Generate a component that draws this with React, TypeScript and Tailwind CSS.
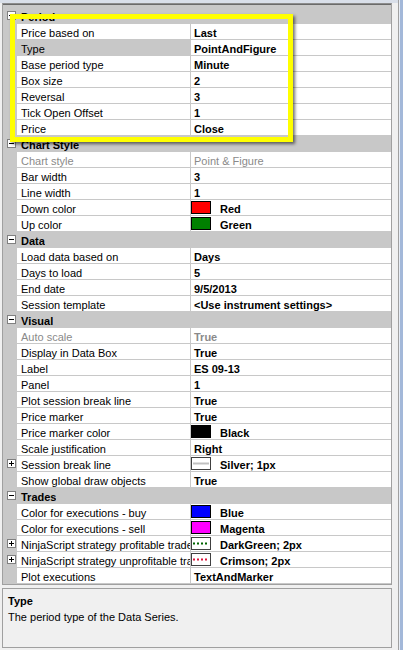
import React from "react";

type Swatch =
  | { kind: "fill"; cls: string }
  | { kind: "line"; color: string; dotted: boolean; width: number };

type Prop = {
  type: "prop";
  name: string;
  value: string;
  disabled?: boolean;
  regular?: boolean;
  selected?: boolean;
  expandable?: boolean;
  swatch?: Swatch;
};

type Category = { type: "cat"; label: string };

type Row = Prop | Category;

const rows: Row[] = [
  { type: "cat", label: "Period" },
  { type: "prop", name: "Price based on", value: "Last" },
  { type: "prop", name: "Type", value: "PointAndFigure", selected: true },
  { type: "prop", name: "Base period type", value: "Minute" },
  { type: "prop", name: "Box size", value: "2" },
  { type: "prop", name: "Reversal", value: "3" },
  { type: "prop", name: "Tick Open Offset", value: "1" },
  { type: "prop", name: "Price", value: "Close" },
  { type: "cat", label: "Chart Style" },
  { type: "prop", name: "Chart style", value: "Point & Figure", disabled: true, regular: true },
  { type: "prop", name: "Bar width", value: "3" },
  { type: "prop", name: "Line width", value: "1" },
  { type: "prop", name: "Down color", value: "Red", swatch: { kind: "fill", cls: "bg-[#ff0000]" } },
  { type: "prop", name: "Up color", value: "Green", swatch: { kind: "fill", cls: "bg-[#008000]" } },
  { type: "cat", label: "Data" },
  { type: "prop", name: "Load data based on", value: "Days" },
  { type: "prop", name: "Days to load", value: "5" },
  { type: "prop", name: "End date", value: "9/5/2013" },
  { type: "prop", name: "Session template", value: "<Use instrument settings>" },
  { type: "cat", label: "Visual" },
  { type: "prop", name: "Auto scale", value: "True", disabled: true },
  { type: "prop", name: "Display in Data Box", value: "True" },
  { type: "prop", name: "Label", value: "ES 09-13" },
  { type: "prop", name: "Panel", value: "1" },
  { type: "prop", name: "Plot session break line", value: "True" },
  { type: "prop", name: "Price marker", value: "True" },
  { type: "prop", name: "Price marker color", value: "Black", swatch: { kind: "fill", cls: "bg-[#000000]" } },
  { type: "prop", name: "Scale justification", value: "Right" },
  {
    type: "prop",
    name: "Session break line",
    value: "Silver; 1px",
    expandable: true,
    swatch: { kind: "line", color: "#c0c0c0", dotted: false, width: 2 },
  },
  { type: "prop", name: "Show global draw objects", value: "True" },
  { type: "cat", label: "Trades" },
  { type: "prop", name: "Color for executions - buy", value: "Blue", swatch: { kind: "fill", cls: "bg-[#0000ff]" } },
  { type: "prop", name: "Color for executions - sell", value: "Magenta", swatch: { kind: "fill", cls: "bg-[#ff00ff]" } },
  {
    type: "prop",
    name: "NinjaScript strategy profitable trades",
    value: "DarkGreen; 2px",
    expandable: true,
    swatch: { kind: "line", color: "#006400", dotted: true, width: 2 },
  },
  {
    type: "prop",
    name: "NinjaScript strategy unprofitable trades",
    value: "Crimson; 2px",
    expandable: true,
    swatch: { kind: "line", color: "#dc143c", dotted: true, width: 2 },
  },
  { type: "prop", name: "Plot executions", value: "TextAndMarker" },
];

function ExpandBox({ open }: { open: boolean }) {
  return (
    <svg width="9" height="9" viewBox="0 0 9 9" className="block shrink-0">
      <rect x="0.5" y="0.5" width="8" height="8" fill="#ffffff" stroke="#808080" />
      <path d="M2 4.5h5" stroke="#000000" strokeWidth="1" />
      {!open && <path d="M4.5 2v5" stroke="#000000" strokeWidth="1" />}
    </svg>
  );
}

function SwatchBox({ swatch }: { swatch: Swatch }) {
  if (swatch.kind === "fill") {
    return <span className={`block w-[20px] h-[13px] shrink-0 border border-black ${swatch.cls}`} />;
  }
  return (
    <span className="block w-[20px] h-[13px] shrink-0 border border-[#404040] bg-white">
      <svg width="18" height="11" viewBox="0 0 18 11" className="block">
        <line
          x1="1"
          y1="5.5"
          x2="17"
          y2="5.5"
          stroke={swatch.color}
          strokeWidth={swatch.width}
          strokeDasharray={swatch.dotted ? "2 2" : undefined}
        />
      </svg>
    </span>
  );
}

function CategoryRow({ label }: { label: string }) {
  return (
    <div className="flex h-[16px] bg-[#c8c8c8]">
      <div className="w-[14px] h-full flex items-start pt-[3px] pl-[4px]">
        <ExpandBox open />
      </div>
      <div className="pl-[4px] font-bold text-black leading-[18px] h-[16px] overflow-hidden">{label}</div>
    </div>
  );
}

function PropRow({ p }: { p: Prop }) {
  const tone = p.disabled ? "text-[#8a8a8a]" : "text-black";
  return (
    <div className="flex h-[16px]">
      <div className="w-[14px] h-[16px] flex items-start pt-[3px] pl-[4px] bg-[#c8c8c8]">
        {p.expandable && <ExpandBox open={false} />}
      </div>
      <div
        className={`w-[173px] h-[16px] border-b border-[#c8c8c8] pl-[4px] overflow-hidden whitespace-nowrap leading-[18px] ${tone} ${
          p.selected ? "bg-[#c8c8c8]" : "bg-white"
        }`}
      >
        {p.name}
      </div>
      <div className="w-[201px] h-[16px] border-l border-b border-[#c8c8c8] bg-white flex items-start overflow-hidden whitespace-nowrap">
        {p.swatch ? (
          <div className="flex items-start h-[15px] pt-[1px]">
            <SwatchBox swatch={p.swatch} />
            <span className={`ml-[9px] font-bold leading-[16px] ${tone}`}>{p.value}</span>
          </div>
        ) : (
          <span className={`pl-[3px] leading-[18px] ${p.regular ? "font-normal" : "font-bold"} ${tone}`}>
            {p.value}
          </span>
        )}
      </div>
    </div>
  );
}

export default function App() {
  return (
    <div className="relative w-[403px] h-[650px] overflow-hidden bg-[#f0f0f0] text-[11px] font-['Liberation_Sans',Arial,sans-serif] flex">
      <div className="w-[398px] flex flex-col">
        {/* window top edge */}
        <div className="h-[3px] bg-[#d9dfe9]" />

        {/* property grid */}
        <div className="ml-[2px] w-[390px] border-x border-[#a0a0a0] border-t border-t-[#8c8c8c] border-b bg-[#c8c8c8]">
          <div className="border-t border-[#6a6a6a] pt-[3px]">
            {rows.map((r, i) =>
              r.type === "cat" ? <CategoryRow key={i} label={r.label} /> : <PropRow key={i} p={r} />
            )}
          </div>
        </div>

        {/* description pane */}
        <div className="mt-[3px] ml-[2px] w-[390px] h-[60px] border border-[#a0a0a0] bg-[#f0f0f0] px-[5px] pt-[5px] text-black">
          <div className="font-bold leading-[14px]">Type</div>
          <div className="leading-[14px] mt-[2px]">The period type of the Data Series.</div>
        </div>
      </div>

      {/* right window frame */}
      <div className="w-[1px] bg-[#a0a0a0]" />
      <div className="w-[1px] bg-[#e8eef7]" />
      <div className="w-[3px] bg-[#a3b8d9]" />

      {/* highlight frame over the Period group */}
      <div className="absolute left-[10px] top-[14px] w-[283px] h-[128px] border-[5px] border-[#ffff00] shadow-[2px_2px_3px_rgba(0,0,0,0.55)]" />
    </div>
  );
}
